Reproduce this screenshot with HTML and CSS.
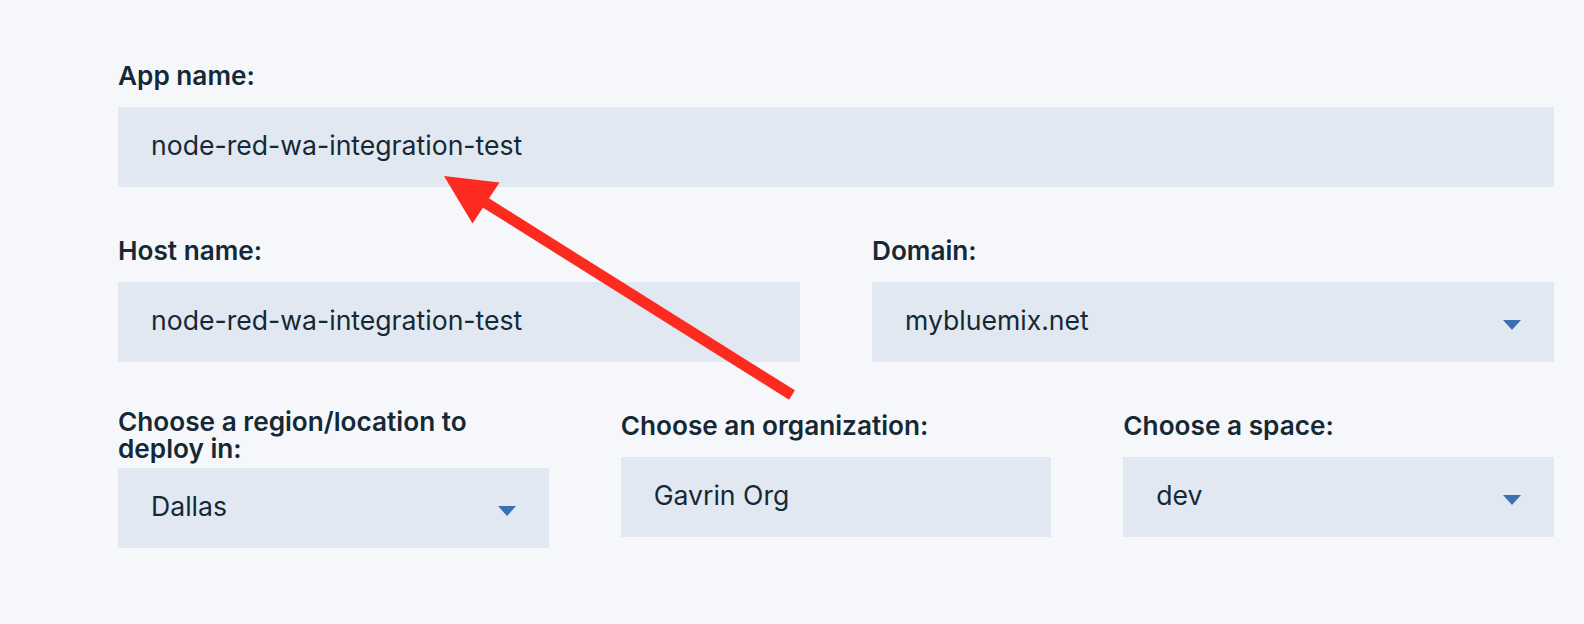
FILE: index.html
```html
<!DOCTYPE html>
<html lang="en">
<head>
<meta charset="utf-8">
<title>Deploy app</title>
<link rel="stylesheet" href="styles.css">
</head>
<body>
<main class="form">
  <div class="row row--one">
    <div class="field">
      <label class="label">App name:</label>
      <div class="input"><span class="value">node-red-wa-integration-test</span></div>
    </div>
  </div>
  <div class="row row--two">
    <div class="field">
      <label class="label">Host name:</label>
      <div class="input"><span class="value">node-red-wa-integration-test</span></div>
    </div>
    <div class="field">
      <label class="label">Domain:</label>
      <div class="input input--select"><span class="value">mybluemix.net</span>
        <svg class="caret" width="18" height="10" viewBox="0 0 18 10"><polygon points="0,0 18,0 9,10"/></svg>
      </div>
    </div>
  </div>
  <div class="row row--three">
    <div class="field field--wrap">
      <label class="label">Choose a region/location to deploy in:</label>
      <div class="input input--select"><span class="value">Dallas</span>
        <svg class="caret" width="18" height="10" viewBox="0 0 18 10"><polygon points="0,0 18,0 9,10"/></svg>
      </div>
    </div>
    <div class="field">
      <label class="label">Choose an organization:</label>
      <div class="input"><span class="value">Gavrin Org</span></div>
    </div>
    <div class="field">
      <label class="label">Choose a space:</label>
      <div class="input input--select"><span class="value">dev</span>
        <svg class="caret" width="18" height="10" viewBox="0 0 18 10"><polygon points="0,0 18,0 9,10"/></svg>
      </div>
    </div>
  </div>
</main>
<svg class="annotation" width="1584" height="624" viewBox="0 0 1584 624">
  <line x1="470" y1="193" x2="792" y2="395" stroke="#fd2a1f" stroke-width="11" stroke-linecap="butt"/>
  <polygon points="444,176 499.5,182.5 472.5,223.5" fill="#fd2a1f"/>
</svg>
</body>
</html>
```
FILE: styles.css
```css
html, body {
  margin: 0;
  padding: 0;
}

body {
  background: #f5f7fb;
  color: #152935;
  font-family: Inter, Roboto, "Liberation Sans", sans-serif;
  width: 1584px;
  height: 624px;
  overflow: hidden;
  position: relative;
}

.form {
  display: flex;
  flex-direction: column;
  gap: 50px;
  padding: 62px 30px 0 118px;
}

.row--two {
  display: grid;
  grid-template-columns: 1fr 1fr;
  column-gap: 72px;
}

.row--three {
  display: grid;
  grid-template-columns: repeat(3, 1fr);
  column-gap: 72px;
  align-items: start;
}

.field {
  display: flex;
  flex-direction: column;
}

.label {
  display: block;
  font-size: 26.2px;
  line-height: 27px;
  font-weight: 600;
  color: #152935;
  margin-bottom: 18px;
}

.field--wrap .label {
  margin-top: -4px;
  margin-bottom: 6px;
}

.input {
  height: 80px;
  background: #e1e8f2;
  display: flex;
  align-items: center;
  justify-content: space-between;
  padding: 0 33px;
  box-sizing: border-box;
}

.value {
  font-size: 26.6px;
  line-height: 34px;
  color: #152935;
  margin-bottom: 4px;
}

.caret {
  fill: #3d70b2;
  margin-top: 6px;
  flex: none;
}

.annotation {
  position: absolute;
  top: 0;
  left: 0;
  pointer-events: none;
}
```
